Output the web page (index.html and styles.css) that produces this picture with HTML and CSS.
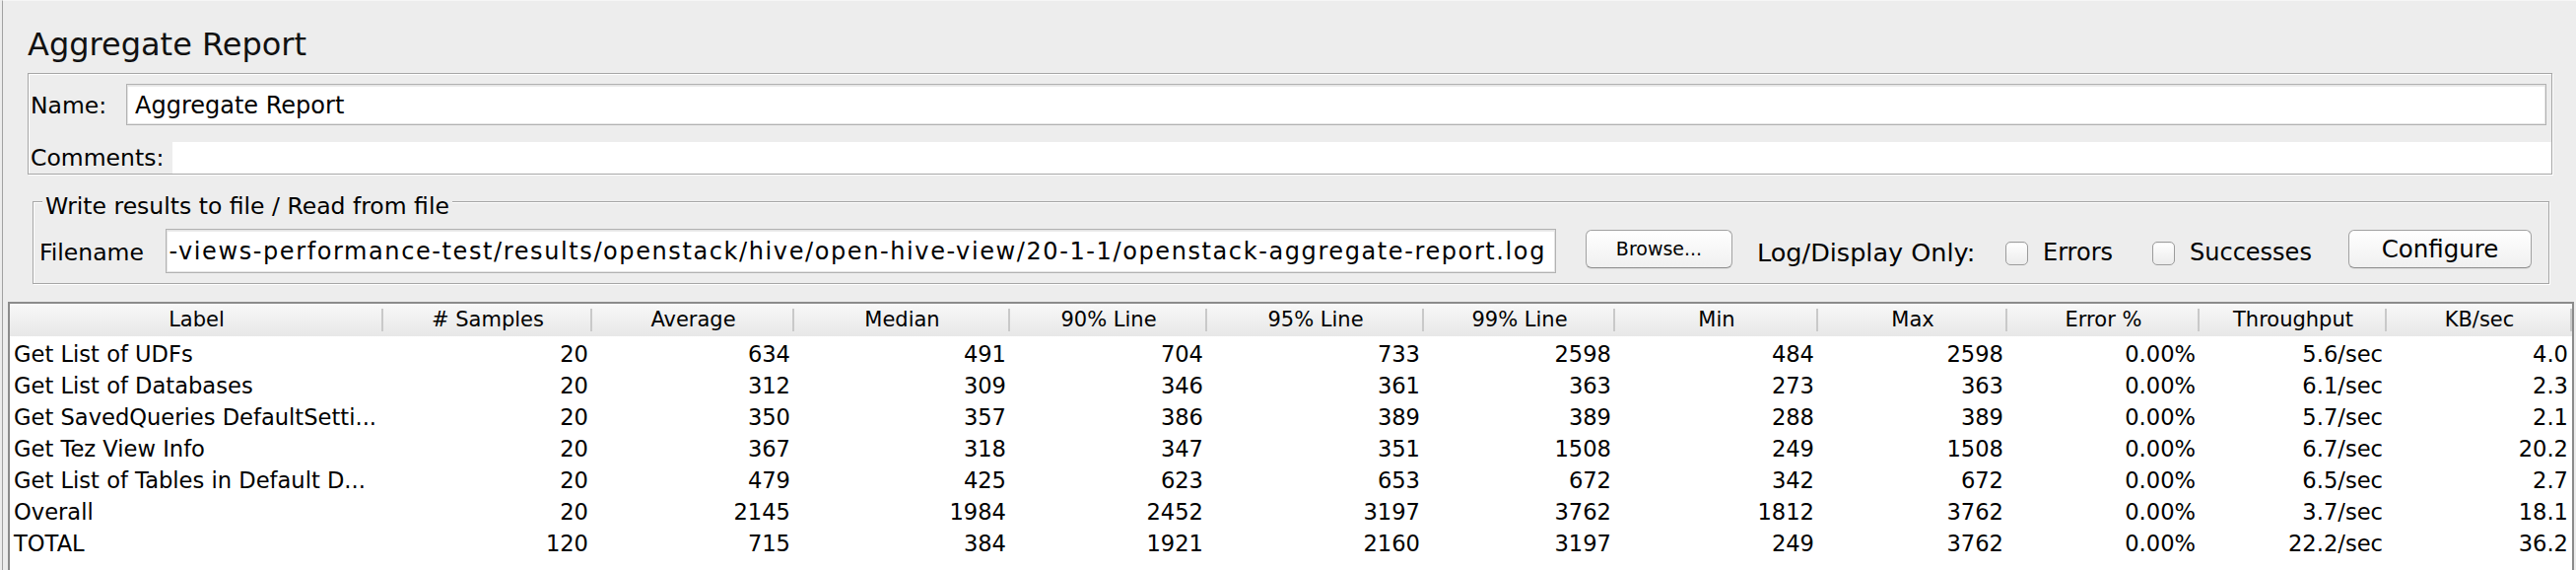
FILE: index.html
```html
<!DOCTYPE html>
<html lang="en">
<head>
<meta charset="utf-8">
<title>Aggregate Report</title>
<link rel="stylesheet" href="styles.css">
</head>
<body>
<div class="window">
  <h1 class="title">Aggregate Report</h1>

  <div class="etched name-box">
    <div class="name-row">
      <span class="lbl name-lbl">Name:</span>
      <div class="field name-field">Aggregate Report</div>
    </div>
    <div class="comments-row">
      <span class="lbl comments-lbl">Comments:</span>
      <div class="comments-area"></div>
    </div>
  </div>

  <div class="etched file-box">
    <div class="legend">Write results to file / Read from file</div>
    <div class="file-row">
      <span class="lbl filename-lbl">Filename</span>
      <div class="field file-field"><span class="file-text">-views-performance-test/results/openstack/hive/open-hive-view/20-1-1/openstack-aggregate-report.log</span></div>
      <button class="btn browse">Browse...</button>
      <span class="lbl log-lbl">Log/Display Only:</span>
      <span class="check"></span>
      <span class="lbl errors-lbl">Errors</span>
      <span class="check check2"></span>
      <span class="lbl succ-lbl">Successes</span>
      <button class="btn configure">Configure</button>
    </div>
  </div>

  <div class="table">
    <div class="cols thead">
      <div class="h">Label</div>
      <div class="h"># Samples</div>
      <div class="h">Average</div>
      <div class="h">Median</div>
      <div class="h">90% Line</div>
      <div class="h">95% Line</div>
      <div class="h">99% Line</div>
      <div class="h">Min</div>
      <div class="h">Max</div>
      <div class="h">Error %</div>
      <div class="h">Throughput</div>
      <div class="h">KB/sec</div>
    </div>
    <div class="cols row">
      <div class="c lab">Get List of UDFs</div><div class="c">20</div><div class="c">634</div><div class="c">491</div><div class="c">704</div><div class="c">733</div><div class="c">2598</div><div class="c">484</div><div class="c">2598</div><div class="c">0.00%</div><div class="c">5.6/sec</div><div class="c">4.0</div>
    </div>
    <div class="cols row">
      <div class="c lab">Get List of Databases</div><div class="c">20</div><div class="c">312</div><div class="c">309</div><div class="c">346</div><div class="c">361</div><div class="c">363</div><div class="c">273</div><div class="c">363</div><div class="c">0.00%</div><div class="c">6.1/sec</div><div class="c">2.3</div>
    </div>
    <div class="cols row">
      <div class="c lab">Get SavedQueries DefaultSetti...</div><div class="c">20</div><div class="c">350</div><div class="c">357</div><div class="c">386</div><div class="c">389</div><div class="c">389</div><div class="c">288</div><div class="c">389</div><div class="c">0.00%</div><div class="c">5.7/sec</div><div class="c">2.1</div>
    </div>
    <div class="cols row">
      <div class="c lab">Get Tez View Info</div><div class="c">20</div><div class="c">367</div><div class="c">318</div><div class="c">347</div><div class="c">351</div><div class="c">1508</div><div class="c">249</div><div class="c">1508</div><div class="c">0.00%</div><div class="c">6.7/sec</div><div class="c">20.2</div>
    </div>
    <div class="cols row">
      <div class="c lab">Get List of Tables in Default D...</div><div class="c">20</div><div class="c">479</div><div class="c">425</div><div class="c">623</div><div class="c">653</div><div class="c">672</div><div class="c">342</div><div class="c">672</div><div class="c">0.00%</div><div class="c">6.5/sec</div><div class="c">2.7</div>
    </div>
    <div class="cols row">
      <div class="c lab">Overall</div><div class="c">20</div><div class="c">2145</div><div class="c">1984</div><div class="c">2452</div><div class="c">3197</div><div class="c">3762</div><div class="c">1812</div><div class="c">3762</div><div class="c">0.00%</div><div class="c">3.7/sec</div><div class="c">18.1</div>
    </div>
    <div class="cols row">
      <div class="c lab">TOTAL</div><div class="c">120</div><div class="c">715</div><div class="c">384</div><div class="c">1921</div><div class="c">2160</div><div class="c">3197</div><div class="c">249</div><div class="c">3762</div><div class="c">0.00%</div><div class="c">22.2/sec</div><div class="c">36.2</div>
    </div>
  </div>
</div>
</body>
</html>
```

FILE: styles.css
```css
html, body {
  margin: 0;
  padding: 0;
  height: 578px;
  overflow: hidden;
  background: #ededed;
}

.window {
  box-sizing: border-box;
  height: 578px;
  margin-left: 2px;
  border-left: 1px solid #a2a2a2;
  border-top: 1px solid #f6f6f6;
  overflow: hidden;
  display: flex;
  flex-direction: column;
  font-family: "Lucida Grande", "DejaVu Sans", sans-serif;
  color: #000;
  background: #ededed;
}

.title {
  margin: 25px 0 0 25px;
  font-size: 32px;
  line-height: 38px;
  font-weight: normal;
  color: #111;
}

.etched {
  border: 1px solid #a6a6a6;
  box-shadow: 1px 1px 0 #fff, inset 1px 1px 0 #fff;
}

/* Name / Comments panel */
.name-box {
  margin: 10px 24px 0 25px;
  padding: 10px 0 0 2px;
  display: flex;
  flex-direction: column;
}

.lbl {
  font-size: 23.5px;
  white-space: nowrap;
  flex: none;
}

.name-row {
  display: flex;
  align-items: flex-start;
  height: 42px;
}

.name-lbl {
  width: 97px;
  box-sizing: border-box;
  height: 42px;
  padding-top: 3px;
  line-height: 39px;
}

.field {
  box-sizing: border-box;
  background: #fff;
  border: 1px solid #b2b2b2;
  box-shadow: inset 0 0 0 1px #e4e4e4, inset 0 2px 0 #ebebeb;
  font-size: 24px;
  white-space: nowrap;
  overflow: hidden;
}

.name-field {
  flex: 1;
  height: 42px;
  margin-right: 5px;
  padding: 3px 8px 0 8px;
  line-height: 37px;
}

.comments-row {
  display: flex;
  margin-top: 17px;
  height: 32px;
}

.comments-lbl {
  width: 144px;
  line-height: 32px;
}

.comments-area {
  flex: 1;
  background: #fff;
}

/* Write results panel */
.file-box {
  margin: 27px 27px 0 30px;
  padding: 0 0 10px 0;
  display: flex;
  flex-direction: column;
}

.legend {
  align-self: flex-start;
  margin: -8px 0 0 9px;
  padding: 0 3px;
  background: #ededed;
  font-size: 23.5px;
  line-height: 24px;
  white-space: nowrap;
}

.file-row {
  display: flex;
  align-items: flex-start;
  height: 45px;
  margin-top: 11px;
}

.file-row .lbl {
  margin-top: 12px;
  line-height: 24px;
}

.filename-lbl {
  margin-left: 6px;
  width: 128px;
}

.file-field {
  flex: none;
  width: 1411px;
  height: 45px;
  padding: 2px 9px 0 8px;
  line-height: 41px;
  display: flex;
  justify-content: flex-end;
}

.file-text {
  flex: none;
  letter-spacing: 1.6px;
}

.btn {
  flex: none;
  box-sizing: border-box;
  height: 39px;
  margin-top: 1px;
  padding: 0;
  border: 1px solid #a2a2a2;
  border-bottom-color: #8f8f8f;
  border-radius: 6px;
  background: linear-gradient(#ffffff, #f0f0f0);
  box-shadow: 0 1px 0 rgba(0, 0, 0, 0.06);
  font-family: "Lucida Grande", "DejaVu Sans", sans-serif;
  color: #000;
  text-align: center;
  line-height: 37px;
}

.browse {
  margin-left: 30px;
  width: 149px;
  font-size: 19px;
}

.log-lbl {
  margin-left: 25px;
  width: 227px;
  font-size: 25.5px;
}

.check {
  flex: none;
  box-sizing: border-box;
  width: 23px;
  height: 24px;
  margin: 13px 0 0 25px;
  border: 1px solid #9c9c9c;
  border-radius: 5px;
  background: linear-gradient(#ffffff, #ececec);
  box-shadow: inset 0 1px 1px rgba(0, 0, 0, 0.06);
}

.check2 {
  margin-left: 38px;
}

.errors-lbl {
  margin-left: 15px;
  width: 73px;
  font-size: 24px;
}

.succ-lbl {
  margin-left: 15px;
  width: 125px;
  font-size: 24px;
}

.configure {
  margin-left: 36px;
  width: 186px;
  font-size: 24.5px;
}

/* Table */
.table {
  flex: none;
  margin: 18px 2px 0 5px;
  height: 300px;
  border: 2px solid #8b8b8b;
  background: #fff;
}

.cols {
  display: grid;
  grid-template-columns: 379px 212px 205px 219px 200px 220px 194px 206px 192px 195px 190px 188px;
}

.thead {
  height: 33px;
  background: linear-gradient(#f8f8f8, #e7e7e7);
}

.h {
  text-align: center;
  font-size: 21px;
  line-height: 33px;
  white-space: nowrap;
  overflow: hidden;
  background: linear-gradient(#c9c9c9, #c9c9c9) no-repeat right 0 top 5px / 2px 23px;
}

.row {
  height: 32px;
}

.c {
  box-sizing: border-box;
  padding: 4px 4px 0 0;
  text-align: right;
  font-size: 22.6px;
  line-height: 28px;
  white-space: nowrap;
  overflow: hidden;
}

.c.lab {
  text-align: left;
  padding-left: 4px;
}
```
